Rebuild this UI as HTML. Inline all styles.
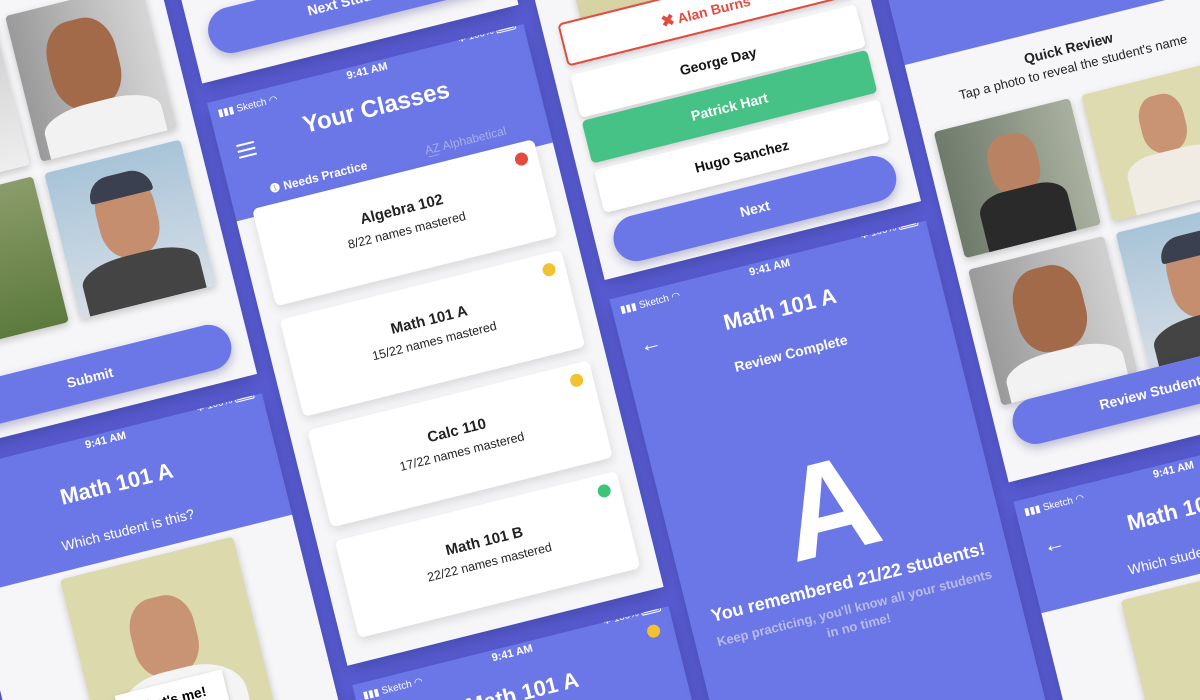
<!DOCTYPE html>
<html style="width:1200px;height:700px;overflow:hidden"><head><meta charset="utf-8">
<style>
*{box-sizing:border-box;margin:0;padding:0}
body{width:1200px;height:700px;overflow:hidden;background:#5c60d8;font-family:"Liberation Sans",sans-serif;position:relative}
#clip{position:absolute;left:0;top:0;width:1200px;height:700px;overflow:hidden}
#w{position:absolute;left:0;top:0;transform-origin:0 0;transform:rotate(-14deg)}
.s{position:absolute;width:326px;height:580px;background:#6b77e6;overflow:hidden;box-shadow:0 6px 18px rgba(30,30,90,.35)}
.a{position:absolute}
.c{text-align:center}
.st{position:absolute;left:0;top:0;width:326px;height:22px;color:#fff;font-size:10px}
.st .l{position:absolute;left:8px;top:8px}
.st .m{position:absolute;left:0;width:326px;top:2px;text-align:center;font-weight:bold;font-size:11px}
.st .r{position:absolute;right:8px;top:-6px}
.bat{display:inline-block;width:20px;height:8px;border:1px solid #fff;border-radius:2px;vertical-align:middle;background:#fff;background-clip:content-box;padding:1px}
.t{color:#fff;font-weight:bold;font-size:22px;text-align:center;width:326px;left:0}
.gray{background:#f6f6f8}
.card{position:absolute;background:#fff;border-radius:6px;box-shadow:0 4px 10px rgba(0,0,0,.12);text-align:center;color:#222}
.card b{display:block;font-size:15px;margin-top:28px}
.card span{display:block;font-size:12.5px;margin-top:6px}
.dot{position:absolute;width:13px;height:13px;border-radius:50%}
.btn{position:absolute;left:16px;width:294px;height:44px;background:#fff;border-radius:5px;box-shadow:0 3px 6px rgba(0,0,0,.15);text-align:center;line-height:44px;font-weight:bold;font-size:14px;color:#111}
.pill{position:absolute;left:18px;width:290px;height:46px;background:#6b77e6;border-radius:23px;color:#fff;text-align:center;line-height:46px;font-size:14px;font-weight:bold;box-shadow:0 4px 10px rgba(40,40,120,.3)}
.ph{position:absolute;border-radius:4px;overflow:hidden;box-shadow:0 3px 8px rgba(0,0,0,.2)}
</style></head><body>
<div id="clip">
<div id="w">

<!-- column 1 -->
<div class="s" style="left:-167px;top:-155px;background:#f6f6f8">
  <div class="ph" style="left:16px;top:172px;width:140px;height:150px;background:linear-gradient(#ccc,#eee)"></div>
  <div class="ph" style="left:168px;top:172px;width:140px;height:150px;background:linear-gradient(90deg,#9a9a9a,#d6d6d6)"><div class="a" style="left:30px;top:20px;width:70px;height:90px;border-radius:40%;background:#a36a4a"></div><div class="a" style="left:10px;top:105px;width:120px;height:50px;border-radius:40% 40% 0 0;background:#f2f2f2"></div></div>
  <div class="ph" style="left:16px;top:334px;width:140px;height:150px;background:linear-gradient(#8a9c6a,#5d7a3d)"></div>
  <div class="ph" style="left:168px;top:334px;width:140px;height:150px;background:linear-gradient(#a8c4d8,#d6dee6)"><div class="a" style="left:40px;top:22px;width:60px;height:80px;border-radius:40%;background:#c58e6e"></div><div class="a" style="left:38px;top:18px;width:64px;height:24px;border-radius:30px 30px 4px 4px;background:#3a4050"></div><div class="a" style="left:10px;top:100px;width:120px;height:50px;border-radius:40% 40% 0 0;background:#444"></div></div>
  <div class="pill" style="top:520px">Submit</div>
</div>
<div class="s" style="left:-167px;top:445px">
  <div class="st"><span class="l">Sketch</span><span class="m">9:41 AM</span><span class="r">✱ 100% <i class="bat"></i></span></div>
  <div class="a t" style="top:40px">Math 101 A</div>
  <div class="a c" style="top:92px;left:0;width:326px;color:#fff;font-size:14px">Which student is this?</div>
  <div class="a gray" style="left:0;top:125px;width:326px;height:455px"></div>
  <div class="ph" style="left:85px;top:132px;width:178px;height:200px;background:#dcd9ad"><div class="a" style="left:55px;top:40px;width:65px;height:80px;border-radius:40%;background:#c99473"></div><div class="a" style="left:25px;top:115px;width:130px;height:90px;border-radius:40% 40% 0 0;background:#f4f4f4"></div></div>
  <div class="a" style="left:110px;top:258px;width:110px;height:34px;background:#fff;box-shadow:0 2px 6px rgba(0,0,0,.2);text-align:center;line-height:34px;font-size:14px;font-weight:bold">That's me!</div>
</div>

<!-- column 2 -->
<div class="s" style="left:176px;top:-450px;background:#f6f6f8">
  <div class="pill" style="top:512px">Next Student</div>
</div>
<div class="s" style="left:176px;top:150px">
  <div class="st"><span class="l">▮▮▮ Sketch ◠</span><span class="m">9:41 AM</span><span class="r">✱ 100% <i class="bat"></i></span></div>
  <div class="a t" style="top:32px;font-size:24px">Your Classes</div>
  <div class="a" style="left:18px;top:48px;width:18px;height:14px;border-top:2px solid #fff;border-bottom:2px solid #fff"><div style="margin-top:4px;height:2px;background:#fff"></div></div>
  <div class="a" style="left:40px;top:92px;color:#fff;font-size:12px;font-weight:bold">❶ Needs Practice</div>
  <div class="a" style="left:200px;top:92px;color:#a7aee8;font-size:12px">A͟Z Alphabetical</div>
  <div class="a gray" style="left:0;top:122px;width:326px;height:460px"></div>
  <div class="card" style="left:18px;top:114px;width:290px;height:100px"><b>Algebra 102</b><span>8/22 names mastered</span><i class="dot" style="right:10px;top:10px;background:#e34b3f"></i></div>
  <div class="card" style="left:18px;top:228px;width:290px;height:100px"><b>Math 101 A</b><span>15/22 names mastered</span><i class="dot" style="right:10px;top:10px;background:#f2c230"></i></div>
  <div class="card" style="left:18px;top:342px;width:290px;height:100px"><b>Calc 110</b><span>17/22 names mastered</span><i class="dot" style="right:10px;top:10px;background:#f2c230"></i></div>
  <div class="card" style="left:18px;top:456px;width:290px;height:100px"><b>Math 101 B</b><span>22/22 names mastered</span><i class="dot" style="right:10px;top:10px;background:#3fc27a"></i></div>
</div>
<div class="s" style="left:176px;top:750px">
  <div class="st"><span class="l">▮▮▮ Sketch ◠</span><span class="m">9:41 AM</span><span class="r">✱ 100% <i class="bat"></i></span></div>
  <div class="a t" style="top:36px">Math 101 A</div>
  <div class="a c" style="top:78px;left:0;width:326px;color:#fff;font-size:14px">Thank you for a quick</div>
  <i class="dot" style="right:14px;top:14px;background:#f2c230"></i>
</div>

<!-- column 3 -->
<div class="s" style="left:519px;top:-162px;background:#f6f6f8">
  <div class="ph" style="left:40px;top:290px;width:120px;height:40px;background:#d8d3a4"></div>
  <div class="btn" style="top:320px;border:2px solid #e34b3f;color:#e34b3f"><span style="font-size:16px">✖</span> Alan Burns</div>
  <div class="btn" style="top:373px">George Day</div>
  <div class="btn" style="top:420px;background:#47c286;color:#fff">Patrick Hart</div>
  <div class="btn" style="top:471px">Hugo Sanchez</div>
  <div class="pill" style="top:524px">Next</div>
</div>
<div class="s" style="left:519px;top:438px">
  <div class="st"><span class="l">▮▮▮ Sketch ◠</span><span class="m">9:41 AM</span><span class="r">✱ 100% <i class="bat"></i></span></div>
  <div class="a t" style="top:38px;font-size:22px">Math 101 A</div>
  <div class="a" style="left:18px;top:40px;color:#fff;font-size:22px">←</div>
  <div class="a c" style="top:88px;left:0;width:326px;color:#fff;font-size:14px;font-weight:bold">Review Complete</div>
  <div class="a c" style="top:185px;left:0;width:326px;color:#fff;font-size:132px;font-weight:bold;line-height:140px">A</div>
  <div class="a c" style="top:322px;left:0;width:326px;color:#fff;font-size:18px;font-weight:bold">You remembered 21/22 students!</div>
  <div class="a c" style="top:350px;left:20px;width:286px;color:#b9bce6;font-size:13px;font-weight:bold;line-height:18px">Keep practicing, you'll know all your students in no time!</div>
</div>

<!-- column 4 -->
<div class="s" style="left:862px;top:132px">
  <div class="a c" style="top:0;left:0;width:326px;color:#fff;font-size:12px">We'll show you a few photos to<br>review before you start.</div>
  <div class="a" style="left:0;top:150px;width:326px;height:440px;background:#f6f6f8"></div>
  <div class="a c" style="top:165px;left:0;width:326px;font-size:14px;font-weight:bold;color:#222">Quick Review</div>
  <div class="a c" style="top:185px;left:0;width:326px;font-size:13px;color:#222">Tap a photo to reveal the student's name</div>
  <div class="ph" style="left:12px;top:222px;width:140px;height:130px;background:linear-gradient(90deg,#6e7a6a,#aab0a0)"><div class="a" style="left:45px;top:20px;width:50px;height:60px;border-radius:40%;background:#b98262"></div><div class="a" style="left:25px;top:75px;width:90px;height:60px;background:#2a2a2a;border-radius:30% 30% 0 0"></div></div>
  <div class="ph" style="left:164px;top:222px;width:140px;height:130px;background:#dedbb0"><div class="a" style="left:50px;top:18px;width:45px;height:58px;border-radius:40%;background:#c99473"></div><div class="a" style="left:25px;top:75px;width:95px;height:60px;background:#f0ece4;border-radius:30% 30% 0 0"></div></div>
  <div class="ph" style="left:12px;top:364px;width:140px;height:140px;background:linear-gradient(90deg,#9a9a9a,#d0d0d0)"><div class="a" style="left:35px;top:15px;width:70px;height:85px;border-radius:40%;background:#a36a4a"></div><div class="a" style="left:10px;top:100px;width:120px;height:50px;border-radius:40% 40% 0 0;background:#f2f2f2"></div></div>
  <div class="ph" style="left:164px;top:364px;width:140px;height:140px;background:linear-gradient(#a8c4d8,#d6dee6)"><div class="a" style="left:40px;top:22px;width:60px;height:80px;border-radius:40%;background:#c58e6e"></div><div class="a" style="left:38px;top:18px;width:64px;height:24px;border-radius:30px 30px 4px 4px;background:#3a4050"></div><div class="a" style="left:10px;top:100px;width:120px;height:50px;border-radius:40% 40% 0 0;background:#444"></div></div>
  <div class="pill" style="top:504px">Review Students</div>
</div>
<div class="s" style="left:862px;top:732px">
  <div class="st"><span class="l">▮▮▮ Sketch ◠</span><span class="m">9:41 AM</span><span class="r">✱ 100% <i class="bat"></i></span></div>
  <div class="a t" style="top:36px">Math 101 A</div>
  <div class="a" style="left:18px;top:38px;color:#fff;font-size:22px">←</div>
  <div class="a c" style="top:86px;left:0;width:326px;color:#fff;font-size:14px">Which student is this?</div>
  <div class="a gray" style="left:0;top:115px;width:326px;height:465px"></div>
  <div class="ph" style="left:80px;top:122px;width:178px;height:200px;background:#dcd9ad"></div>
</div>

</div>
</div>
</body></html>
